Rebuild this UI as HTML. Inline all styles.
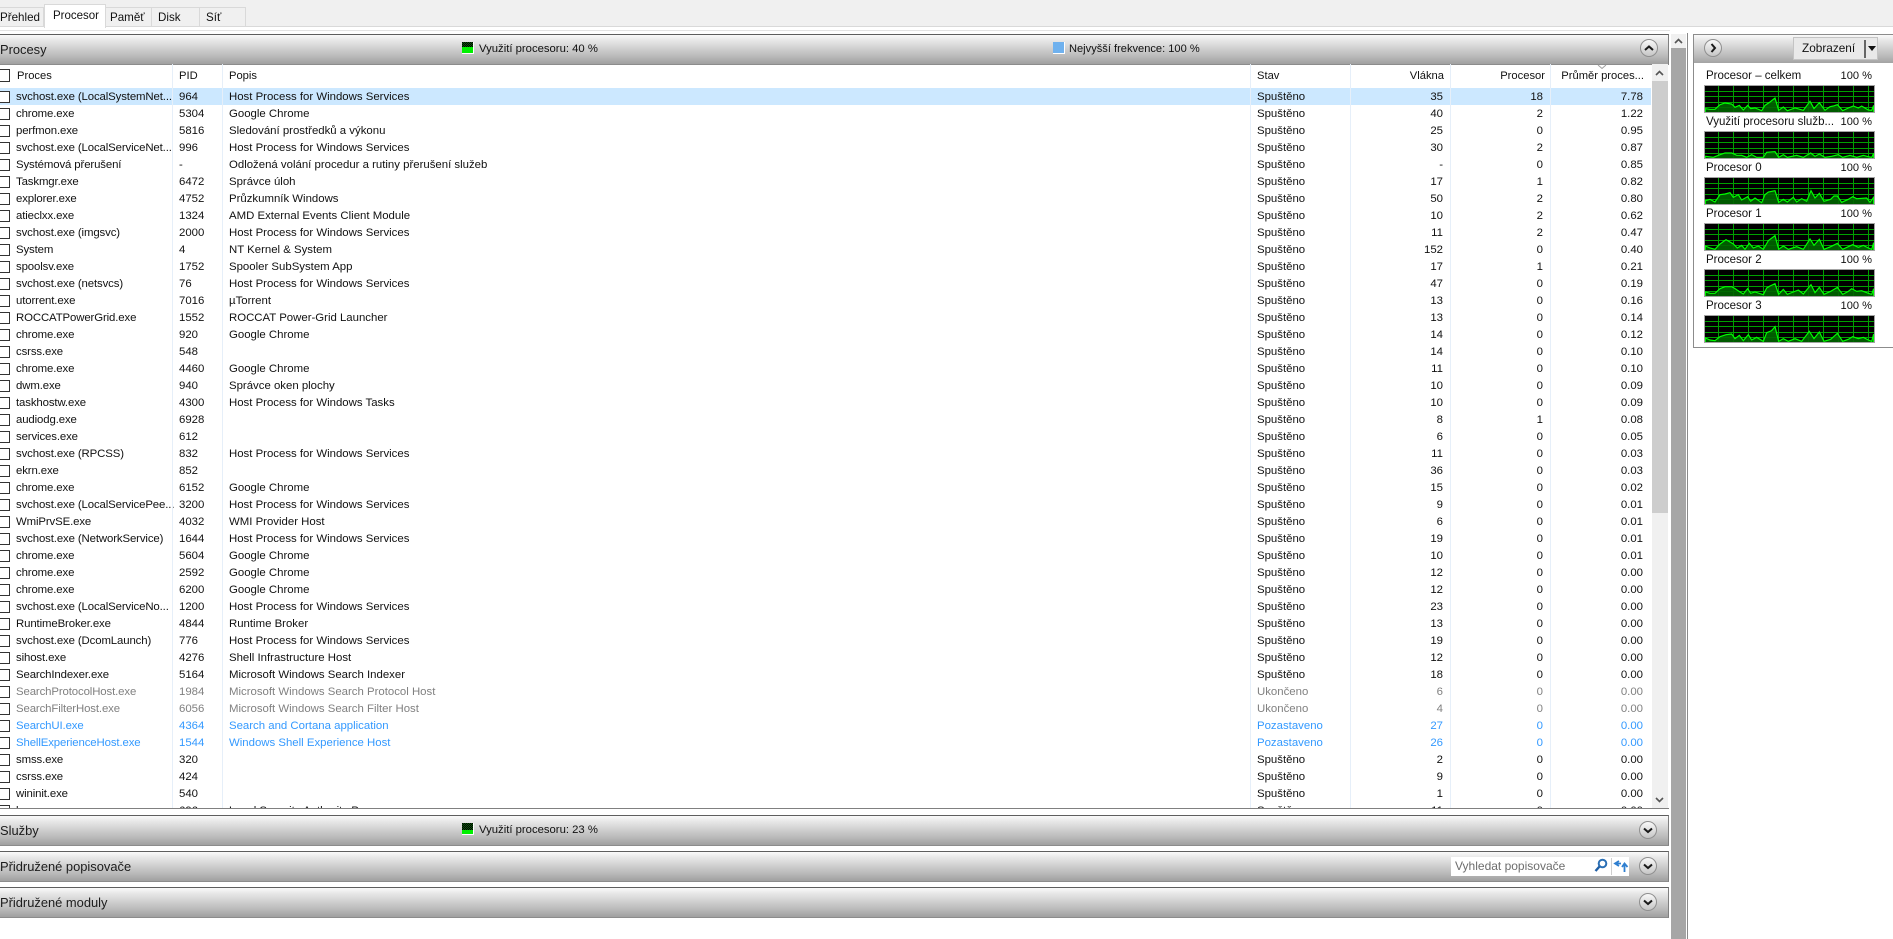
<!DOCTYPE html>
<html lang="cs"><head><meta charset="utf-8"><title>Monitorování prostředků</title>
<style>
html,body{margin:0;padding:0;background:#fff;width:1893px;height:939px;overflow:hidden}
body{font:11.4px/17px "Liberation Sans",sans-serif;color:#111;position:relative}
div,span,svg,i,b{position:absolute;display:block}
#bar{left:0;top:0;width:1893px;height:26px;background:#f0f0f0;border-bottom:1px solid #d9d9d9}
#ln{left:0;top:30px;width:1670px;height:1px;background:#e3e3e3}
.t{top:7px;height:18px;background:#f0f0f0;border:1px solid #d9d9d9;border-bottom:0;line-height:19px;font-size:11.6px;box-sizing:content-box}
#tab{left:44px;top:4px;width:60px;height:23px;background:#fff;border:1px solid #d9d9d9;border-bottom:0;line-height:22px;font-size:11.5px;text-indent:8px}
.h{left:0;width:1668px;height:29px;border-top:1px solid #5e5e5e;border-bottom:1px solid #8c8c8c;border-right:1px solid #808080;background:linear-gradient(#fafafa,#e8e8e8 18%,#b8b8b8 75%,#a0a0a0);box-sizing:content-box}
.h b{font-weight:normal;font-size:12.9px;line-height:29px;left:0;top:0;color:#1c1c1c}
.lg{font-size:11.3px;line-height:29px;top:0;color:#111}
.ic{top:7px;width:11px;height:11px;background:#000;background-image:repeating-conic-gradient(#0a5a0a 0 25%,#000 0 50%);background-size:2px 2px;border-right:1px solid #fff;border-bottom:1px solid #fff}
.ic i{left:0;bottom:0;width:11px;height:6px;background:#00f000}
.hd{top:64px;height:24px;line-height:24px;color:#111;font-size:11.2px}
.vs{top:64px;height:744px;width:1px;background:#e6eff9}
#rows{left:0;top:88px;width:1651px;height:720px;overflow:hidden}
.r{position:relative;display:block;height:17px;width:1651px;margin:0}
.r i{left:-4px;top:3px;width:12px;height:10px;border:1px solid #333;background:#fff}
.r b{font-weight:normal;white-space:nowrap;top:1px}
.r b:nth-of-type(1){left:16px;letter-spacing:-.12px}.r b:nth-of-type(2){left:179px}.r b:nth-of-type(3){left:229px}.r b:nth-of-type(4){left:1257px}
.r b:nth-of-type(5){right:208px}.r b:nth-of-type(6){right:108px}.r b:nth-of-type(7){right:8px}
.s{background:#cce8ff}.g{color:#808080}.u{color:#3399ff}
.lb{left:1706px;font-size:11.5px;white-space:nowrap}
.pc{left:1830px;width:42px;text-align:right;font-size:11.1px}
</style></head><body>
<div id="bar"></div>
<div id="ln"></div>
<div class="t" style="left:0;width:43px;border-left:0">Přehled</div>
<div class="t" style="left:105px;width:45px;text-indent:4px">Paměť</div>
<div class="t" style="left:151px;width:47px;text-indent:6px">Disk</div>
<div class="t" style="left:199px;width:45px;text-indent:6px">Síť</div>
<div id="tab">Procesor</div>

<div class="h" style="top:34px">
<b>Procesy</b>
<div class="ic" style="left:462px"><i></i></div><span class="lg" style="left:479px">Využití procesoru: 40 %</span>
<div class="ic" style="left:1053px;background:#6fb1ee"></div><span class="lg" style="left:1069px;font-size:11.1px">Nejvyšší frekvence: 100 %</span>
</div>
<svg style="left:1639px;top:38px" width="20" height="20" viewBox="0 0 20 20"><defs><linearGradient id="c" x1="0" y1="0" x2="0" y2="1"><stop offset="0" stop-color="#fafafa"/><stop offset="1" stop-color="#c4c4c4"/></linearGradient></defs><circle cx="10" cy="10" r="8.5" fill="url(#c)" stroke="#8f8f8f"/><path d="M6 12 L10 8.5 L14 12" fill="none" stroke="#1a1a1a" stroke-width="2"/></svg>

<div style="left:1669px;top:33px;width:18px;height:906px;background:#fff"></div>
<div style="left:1671px;top:34px;width:15px;height:14px;background:#f0f0f0"></div>
<div style="left:1671px;top:48px;width:15px;height:891px;background:#a6a6a6"></div>
<svg style="left:1673px;top:37px" width="11" height="8" viewBox="0 0 11 8"><path d="M2 6 L5.5 2.5 L9 6" fill="none" stroke="#555" stroke-width="1.6"/></svg>
<div style="left:1687px;top:33px;width:1px;height:906px;background:#8a8a8a"></div>

<div class="hd" style="left:0;width:1651px;height:24px"></div>
<div style="left:-4px;top:69px;width:12px;height:11px;border:1px solid #333;background:#fff"></div>
<span class="hd" style="left:17px">Proces</span>
<span class="hd" style="left:179px">PID</span>
<span class="hd" style="left:229px">Popis</span>
<span class="hd" style="left:1257px">Stav</span>
<span class="hd" style="right:449px">Vlákna</span>
<span class="hd" style="right:348px">Procesor</span>
<span class="hd" style="right:249px">Průměr proces...</span>
<svg style="left:1597px;top:64px" width="10" height="6" viewBox="0 0 10 6"><path d="M1 1 L5 4.5 L9 1" fill="none" stroke="#a0a0a0" stroke-width="1"/></svg>

<div id="rows">
<p class="r s"><i></i><b>svchost.exe (LocalSystemNet...</b><b>964</b><b>Host Process for Windows Services</b><b>Spuštěno</b><b>35</b><b>18</b><b>7.78</b></p>
<p class="r"><i></i><b>chrome.exe</b><b>5304</b><b>Google Chrome</b><b>Spuštěno</b><b>40</b><b>2</b><b>1.22</b></p>
<p class="r"><i></i><b>perfmon.exe</b><b>5816</b><b>Sledování prostředků a výkonu</b><b>Spuštěno</b><b>25</b><b>0</b><b>0.95</b></p>
<p class="r"><i></i><b>svchost.exe (LocalServiceNet...</b><b>996</b><b>Host Process for Windows Services</b><b>Spuštěno</b><b>30</b><b>2</b><b>0.87</b></p>
<p class="r"><i></i><b>Systémová přerušení</b><b>-</b><b>Odložená volání procedur a rutiny přerušení služeb</b><b>Spuštěno</b><b>-</b><b>0</b><b>0.85</b></p>
<p class="r"><i></i><b>Taskmgr.exe</b><b>6472</b><b>Správce úloh</b><b>Spuštěno</b><b>17</b><b>1</b><b>0.82</b></p>
<p class="r"><i></i><b>explorer.exe</b><b>4752</b><b>Průzkumník Windows</b><b>Spuštěno</b><b>50</b><b>2</b><b>0.80</b></p>
<p class="r"><i></i><b>atieclxx.exe</b><b>1324</b><b>AMD External Events Client Module</b><b>Spuštěno</b><b>10</b><b>2</b><b>0.62</b></p>
<p class="r"><i></i><b>svchost.exe (imgsvc)</b><b>2000</b><b>Host Process for Windows Services</b><b>Spuštěno</b><b>11</b><b>2</b><b>0.47</b></p>
<p class="r"><i></i><b>System</b><b>4</b><b>NT Kernel &amp; System</b><b>Spuštěno</b><b>152</b><b>0</b><b>0.40</b></p>
<p class="r"><i></i><b>spoolsv.exe</b><b>1752</b><b>Spooler SubSystem App</b><b>Spuštěno</b><b>17</b><b>1</b><b>0.21</b></p>
<p class="r"><i></i><b>svchost.exe (netsvcs)</b><b>76</b><b>Host Process for Windows Services</b><b>Spuštěno</b><b>47</b><b>0</b><b>0.19</b></p>
<p class="r"><i></i><b>utorrent.exe</b><b>7016</b><b>µTorrent</b><b>Spuštěno</b><b>13</b><b>0</b><b>0.16</b></p>
<p class="r"><i></i><b>ROCCATPowerGrid.exe</b><b>1552</b><b>ROCCAT Power-Grid Launcher</b><b>Spuštěno</b><b>13</b><b>0</b><b>0.14</b></p>
<p class="r"><i></i><b>chrome.exe</b><b>920</b><b>Google Chrome</b><b>Spuštěno</b><b>14</b><b>0</b><b>0.12</b></p>
<p class="r"><i></i><b>csrss.exe</b><b>548</b><b></b><b>Spuštěno</b><b>14</b><b>0</b><b>0.10</b></p>
<p class="r"><i></i><b>chrome.exe</b><b>4460</b><b>Google Chrome</b><b>Spuštěno</b><b>11</b><b>0</b><b>0.10</b></p>
<p class="r"><i></i><b>dwm.exe</b><b>940</b><b>Správce oken plochy</b><b>Spuštěno</b><b>10</b><b>0</b><b>0.09</b></p>
<p class="r"><i></i><b>taskhostw.exe</b><b>4300</b><b>Host Process for Windows Tasks</b><b>Spuštěno</b><b>10</b><b>0</b><b>0.09</b></p>
<p class="r"><i></i><b>audiodg.exe</b><b>6928</b><b></b><b>Spuštěno</b><b>8</b><b>1</b><b>0.08</b></p>
<p class="r"><i></i><b>services.exe</b><b>612</b><b></b><b>Spuštěno</b><b>6</b><b>0</b><b>0.05</b></p>
<p class="r"><i></i><b>svchost.exe (RPCSS)</b><b>832</b><b>Host Process for Windows Services</b><b>Spuštěno</b><b>11</b><b>0</b><b>0.03</b></p>
<p class="r"><i></i><b>ekrn.exe</b><b>852</b><b></b><b>Spuštěno</b><b>36</b><b>0</b><b>0.03</b></p>
<p class="r"><i></i><b>chrome.exe</b><b>6152</b><b>Google Chrome</b><b>Spuštěno</b><b>15</b><b>0</b><b>0.02</b></p>
<p class="r"><i></i><b>svchost.exe (LocalServicePee...</b><b>3200</b><b>Host Process for Windows Services</b><b>Spuštěno</b><b>9</b><b>0</b><b>0.01</b></p>
<p class="r"><i></i><b>WmiPrvSE.exe</b><b>4032</b><b>WMI Provider Host</b><b>Spuštěno</b><b>6</b><b>0</b><b>0.01</b></p>
<p class="r"><i></i><b>svchost.exe (NetworkService)</b><b>1644</b><b>Host Process for Windows Services</b><b>Spuštěno</b><b>19</b><b>0</b><b>0.01</b></p>
<p class="r"><i></i><b>chrome.exe</b><b>5604</b><b>Google Chrome</b><b>Spuštěno</b><b>10</b><b>0</b><b>0.01</b></p>
<p class="r"><i></i><b>chrome.exe</b><b>2592</b><b>Google Chrome</b><b>Spuštěno</b><b>12</b><b>0</b><b>0.00</b></p>
<p class="r"><i></i><b>chrome.exe</b><b>6200</b><b>Google Chrome</b><b>Spuštěno</b><b>12</b><b>0</b><b>0.00</b></p>
<p class="r"><i></i><b>svchost.exe (LocalServiceNo...</b><b>1200</b><b>Host Process for Windows Services</b><b>Spuštěno</b><b>23</b><b>0</b><b>0.00</b></p>
<p class="r"><i></i><b>RuntimeBroker.exe</b><b>4844</b><b>Runtime Broker</b><b>Spuštěno</b><b>13</b><b>0</b><b>0.00</b></p>
<p class="r"><i></i><b>svchost.exe (DcomLaunch)</b><b>776</b><b>Host Process for Windows Services</b><b>Spuštěno</b><b>19</b><b>0</b><b>0.00</b></p>
<p class="r"><i></i><b>sihost.exe</b><b>4276</b><b>Shell Infrastructure Host</b><b>Spuštěno</b><b>12</b><b>0</b><b>0.00</b></p>
<p class="r"><i></i><b>SearchIndexer.exe</b><b>5164</b><b>Microsoft Windows Search Indexer</b><b>Spuštěno</b><b>18</b><b>0</b><b>0.00</b></p>
<p class="r g"><i></i><b>SearchProtocolHost.exe</b><b>1984</b><b>Microsoft Windows Search Protocol Host</b><b>Ukončeno</b><b>6</b><b>0</b><b>0.00</b></p>
<p class="r g"><i></i><b>SearchFilterHost.exe</b><b>6056</b><b>Microsoft Windows Search Filter Host</b><b>Ukončeno</b><b>4</b><b>0</b><b>0.00</b></p>
<p class="r u"><i></i><b>SearchUI.exe</b><b>4364</b><b>Search and Cortana application</b><b>Pozastaveno</b><b>27</b><b>0</b><b>0.00</b></p>
<p class="r u"><i></i><b>ShellExperienceHost.exe</b><b>1544</b><b>Windows Shell Experience Host</b><b>Pozastaveno</b><b>26</b><b>0</b><b>0.00</b></p>
<p class="r"><i></i><b>smss.exe</b><b>320</b><b></b><b>Spuštěno</b><b>2</b><b>0</b><b>0.00</b></p>
<p class="r"><i></i><b>csrss.exe</b><b>424</b><b></b><b>Spuštěno</b><b>9</b><b>0</b><b>0.00</b></p>
<p class="r"><i></i><b>wininit.exe</b><b>540</b><b></b><b>Spuštěno</b><b>1</b><b>0</b><b>0.00</b></p>
<p class="r"><i></i><b>lsass.exe</b><b>696</b><b>Local Security Authority Process</b><b>Spuštěno</b><b>11</b><b>0</b><b>0.00</b></p>
</div>
<div class="vs" style="left:172px"></div><div class="vs" style="left:222px"></div><div class="vs" style="left:1250px"></div><div class="vs" style="left:1350px"></div><div class="vs" style="left:1450px"></div><div class="vs" style="left:1550px"></div>

<div style="left:1652px;top:64px;width:16px;height:744px;background:#f0f0f0"></div>
<div style="left:1652px;top:81px;width:16px;height:432px;background:#cdcdcd"></div>
<svg style="left:1654px;top:69px" width="11" height="8" viewBox="0 0 11 8"><path d="M2 6 L5.5 2.5 L9 6" fill="none" stroke="#555" stroke-width="1.6"/></svg>
<svg style="left:1654px;top:796px" width="11" height="8" viewBox="0 0 11 8"><path d="M2 2 L5.5 5.5 L9 2" fill="none" stroke="#555" stroke-width="1.6"/></svg>
<div style="left:0;top:808px;width:1669px;height:1px;background:#808080"></div>

<div class="h" style="top:815px"><b>Služby</b><div class="ic" style="left:462px"><i style="height:4px"></i></div><span class="lg" style="left:479px">Využití procesoru: 23 %</span></div>
<div class="h" style="top:851px"><b>Přidružené popisovače</b></div>
<div class="h" style="top:887px"><b>Přidružené moduly</b></div>
<svg style="left:1638px;top:820px" width="20" height="20" viewBox="0 0 20 20"><circle cx="10" cy="10" r="8.5" fill="url(#c)" stroke="#8f8f8f"/><path d="M6 8.5 L10 12 L14 8.5" fill="none" stroke="#1a1a1a" stroke-width="2"/></svg>
<svg style="left:1638px;top:856px" width="20" height="20" viewBox="0 0 20 20"><circle cx="10" cy="10" r="8.5" fill="url(#c)" stroke="#8f8f8f"/><path d="M6 8.5 L10 12 L14 8.5" fill="none" stroke="#1a1a1a" stroke-width="2"/></svg>
<svg style="left:1638px;top:892px" width="20" height="20" viewBox="0 0 20 20"><circle cx="10" cy="10" r="8.5" fill="url(#c)" stroke="#8f8f8f"/><path d="M6 8.5 L10 12 L14 8.5" fill="none" stroke="#1a1a1a" stroke-width="2"/></svg>

<div style="left:1451px;top:857px;width:178px;height:19px;background:#fff"></div>
<span style="left:1455px;top:858px;color:#6d6d6d;font-size:12px">Vyhledat popisovače</span>
<svg style="left:1594px;top:858px" width="14" height="15" viewBox="0 0 14 15"><circle cx="8.5" cy="5.5" r="3.8" fill="none" stroke="#2b6fb5" stroke-width="2"/><path d="M5.5 8.5 L1.5 13" stroke="#1f5fa5" stroke-width="2.4" fill="none"/></svg>
<div style="left:1611px;top:858px;width:1px;height:17px;background:#cfcfcf"></div>
<svg style="left:1613px;top:858px" width="16" height="16" viewBox="0 0 16 16"><path d="M6 3 L2 5.5 L6 8 M2.5 5.5 H8" fill="none" stroke="#2f7fd0" stroke-width="1.8"/><path d="M9 9 L11.500 5.500 L14.500 9 M11.500 7 V14" fill="none" stroke="#2f7fd0" stroke-width="1.8"/></svg>

<div style="left:1693px;top:34px;width:200px;height:29px;border:1px solid #8c8c8c;border-right:0;background:linear-gradient(#fafafa,#e8e8e8 18%,#b8b8b8 75%,#a0a0a0);box-sizing:content-box"></div>
<div style="left:1693px;top:63px;width:200px;height:284px;border-left:1px solid #8c8c8c;border-bottom:1px solid #8c8c8c;background:#fff"></div>
<svg style="left:1703px;top:38px" width="20" height="20" viewBox="0 0 20 20"><circle cx="10" cy="10" r="8.5" fill="url(#c)" stroke="#8f8f8f"/><path d="M8.500 6 L12 10 L8.500 14" fill="none" stroke="#1a1a1a" stroke-width="2"/></svg>
<div style="left:1793px;top:37px;width:85px;height:23px;background:#e9e9e9;border:1px solid #c4c4c4;box-sizing:border-box;line-height:21px;text-indent:8px;color:#111;font-size:11.8px">Zobrazení</div>
<div style="left:1864px;top:40px;width:2px;height:18px;background:#666"></div>
<svg style="left:1867px;top:45px" width="10" height="7" viewBox="0 0 10 7"><path d="M1 1 H9 L5 6 Z" fill="#111"/></svg>

<span class="lb" style="top:68px">Procesor – celkem</span><span class="lb pc" style="top:68px">100 %</span>
<span class="lb" style="top:114px">Využití procesoru služb...</span><span class="lb pc" style="top:114px">100 %</span>
<span class="lb" style="top:160px">Procesor 0</span><span class="lb pc" style="top:160px">100 %</span>
<span class="lb" style="top:206px">Procesor 1</span><span class="lb pc" style="top:206px">100 %</span>
<span class="lb" style="top:252px">Procesor 2</span><span class="lb pc" style="top:252px">100 %</span>
<span class="lb" style="top:298px">Procesor 3</span><span class="lb pc" style="top:298px">100 %</span>

<svg style="left:1700px;top:82px" width="180" height="31" viewBox="0 0 540 93"><rect x="13.500" y="10.500" width="510" height="81" fill="#000"/><path d="M55.500 10V92M100.500 10V92M145.500 10V92M190.500 10V92M235.500 10V92M280.500 10V92M325.500 10V92M370.500 10V92M415.500 10V92M460.500 10V92M505.500 10V92M14 28.500H523M14 43.500H523M14 61.500H523M14 76.500H523" stroke="#00a000" stroke-width="3" fill="none"/><polygon points="16,120 16,80 30,82 45,82 60,68 75,63 95,66 105,76 118,70 130,84 143,70 152,80 165,78 185,86 195,70 210,60 225,48 236,85 250,75 262,86 285,78 310,85 330,58 342,80 358,62 375,85 390,74 400,72 412,68 428,86 445,78 460,72 475,78 485,72 505,84 515,85 521,70 521,120" fill="#006400" fill-opacity=".9" stroke="#00ff00" stroke-width="3.500"/><rect x="13.500" y="10.500" width="510" height="81" fill="none" stroke="#a3a3a3" stroke-width="3"/></svg>
<svg style="left:1700px;top:128px" width="180" height="31" viewBox="0 0 540 93"><rect x="13.500" y="10.500" width="510" height="81" fill="#000"/><path d="M55.500 10V92M100.500 10V92M145.500 10V92M190.500 10V92M235.500 10V92M280.500 10V92M325.500 10V92M370.500 10V92M415.500 10V92M460.500 10V92M505.500 10V92M14 28.500H523M14 43.500H523M14 61.500H523M14 76.500H523" stroke="#00a000" stroke-width="3" fill="none"/><polygon points="16,120 16,85 40,88 60,80 75,75 95,75 110,82 125,82 140,88 155,80 170,88 190,88 200,73 225,71 236,88 250,80 262,88 290,82 310,88 332,75 345,85 358,78 375,88 395,85 415,80 428,88 450,82 470,88 490,82 505,86 515,88 521,76 521,120" fill="#006400" fill-opacity=".9" stroke="#00ff00" stroke-width="3.500"/><rect x="13.500" y="10.500" width="510" height="81" fill="none" stroke="#a3a3a3" stroke-width="3"/></svg>
<svg style="left:1700px;top:174px" width="180" height="31" viewBox="0 0 540 93"><rect x="13.500" y="10.500" width="510" height="81" fill="#000"/><path d="M55.500 10V92M100.500 10V92M145.500 10V92M190.500 10V92M235.500 10V92M280.500 10V92M325.500 10V92M370.500 10V92M415.500 10V92M460.500 10V92M505.500 10V92M14 28.500H523M14 43.500H523M14 61.500H523M14 76.500H523" stroke="#00a000" stroke-width="3" fill="none"/><polygon points="16,120 16,80 30,76 45,84 60,62 75,60 90,56 100,70 115,62 125,78 143,68 152,82 165,72 185,86 195,62 205,54 225,50 236,85 250,76 262,84 280,70 290,84 305,74 320,82 333,50 345,72 358,58 372,82 392,76 402,66 412,66 425,85 445,76 458,68 470,74 500,72 510,85 521,70 521,120" fill="#006400" fill-opacity=".9" stroke="#00ff00" stroke-width="3.500"/><rect x="13.500" y="10.500" width="510" height="81" fill="none" stroke="#a3a3a3" stroke-width="3"/></svg>
<svg style="left:1700px;top:220px" width="180" height="31" viewBox="0 0 540 93"><rect x="13.500" y="10.500" width="510" height="81" fill="#000"/><path d="M55.500 10V92M100.500 10V92M145.500 10V92M190.500 10V92M235.500 10V92M280.500 10V92M325.500 10V92M370.500 10V92M415.500 10V92M460.500 10V92M505.500 10V92M14 28.500H523M14 43.500H523M14 61.500H523M14 76.500H523" stroke="#00a000" stroke-width="3" fill="none"/><polygon points="16,120 16,78 30,84 45,88 60,72 78,59 100,72 112,84 125,76 135,88 148,70 160,84 175,78 190,88 205,62 225,47 236,88 250,78 265,88 290,80 310,88 330,57 342,76 358,58 372,88 392,80 412,70 428,88 445,80 458,74 475,82 490,76 505,84 515,88 521,68 521,120" fill="#006400" fill-opacity=".9" stroke="#00ff00" stroke-width="3.500"/><rect x="13.500" y="10.500" width="510" height="81" fill="none" stroke="#a3a3a3" stroke-width="3"/></svg>
<svg style="left:1700px;top:266px" width="180" height="31" viewBox="0 0 540 93"><rect x="13.500" y="10.500" width="510" height="81" fill="#000"/><path d="M55.500 10V92M100.500 10V92M145.500 10V92M190.500 10V92M235.500 10V92M280.500 10V92M325.500 10V92M370.500 10V92M415.500 10V92M460.500 10V92M505.500 10V92M14 28.500H523M14 43.500H523M14 61.500H523M14 76.500H523" stroke="#00a000" stroke-width="3" fill="none"/><polygon points="16,120 16,78 30,82 45,82 60,68 75,62 95,62 105,68 120,78 130,84 143,68 152,82 165,78 190,86 200,66 210,60 225,53 236,85 250,70 262,85 280,78 295,72 310,84 333,56 345,80 358,64 372,85 392,76 412,64 428,85 445,76 455,68 470,76 485,74 505,82 515,85 521,68 521,120" fill="#006400" fill-opacity=".9" stroke="#00ff00" stroke-width="3.500"/><rect x="13.500" y="10.500" width="510" height="81" fill="none" stroke="#a3a3a3" stroke-width="3"/></svg>
<svg style="left:1700px;top:312px" width="180" height="31" viewBox="0 0 540 93"><rect x="13.500" y="10.500" width="510" height="81" fill="#000"/><path d="M55.500 10V92M100.500 10V92M145.500 10V92M190.500 10V92M235.500 10V92M280.500 10V92M325.500 10V92M370.500 10V92M415.500 10V92M460.500 10V92M505.500 10V92M14 28.500H523M14 43.500H523M14 61.500H523M14 76.500H523" stroke="#00a000" stroke-width="3" fill="none"/><polygon points="16,120 16,78 30,84 45,86 60,74 78,68 95,66 105,80 118,70 130,86 145,68 155,84 170,76 190,88 200,62 215,56 225,44 236,88 250,80 265,88 285,80 305,88 328,58 342,80 358,60 372,88 392,82 412,64 428,88 445,82 458,74 475,80 490,76 505,84 515,88 521,66 521,120" fill="#006400" fill-opacity=".9" stroke="#00ff00" stroke-width="3.500"/><rect x="13.500" y="10.500" width="510" height="81" fill="none" stroke="#a3a3a3" stroke-width="3"/></svg>
</body></html>
